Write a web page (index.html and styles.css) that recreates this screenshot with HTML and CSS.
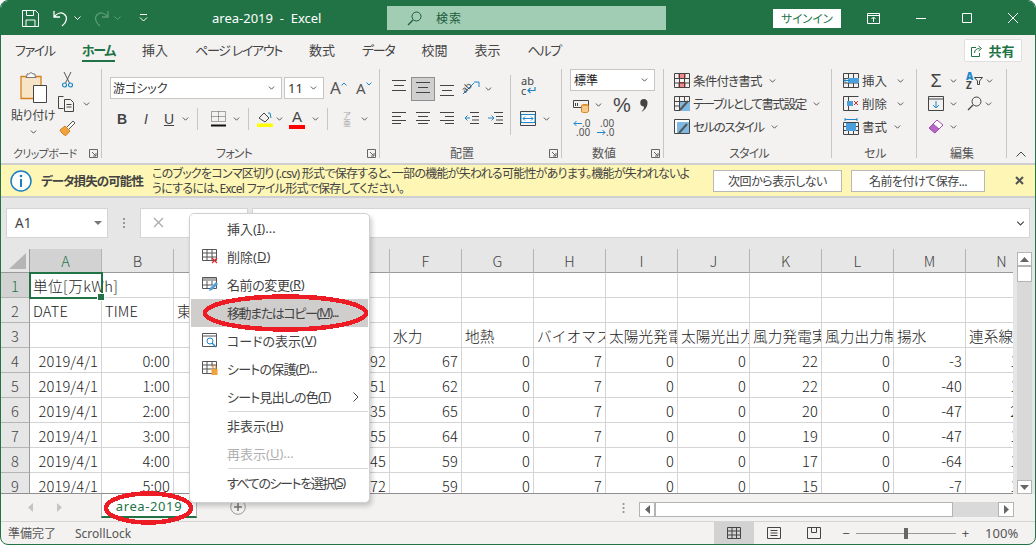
FILE: index.html
```html
<!DOCTYPE html>
<html lang="ja">
<head>
    <meta charset="UTF-8">
    <title>area-2019 - Excel</title>
    <link rel="stylesheet" href="styles.css">
</head>
<body>

<svg class="defs" width="0" height="0">
    <symbol id="chev" viewBox="0 0 8 5"><path d="M.7.7 4 4 7.3.7" fill="none" stroke="#444" stroke-width="1.1"/></symbol>
    <symbol id="launch" viewBox="0 0 9 9"><path d="M.5 8.500V.5h8v8z M3 3l4 4M7 4v3H4" fill="none" stroke="#666"/></symbol>
    <symbol id="al3" viewBox="0 0 14 14"><path d="M0 .5h14M2 5.500h10M0 10.500h14" fill="none" stroke="#444"/></symbol>
    <symbol id="al-l" viewBox="0 0 14 12"><path d="M0 .5h14M0 4.500h9M0 8.500h14M0 11.500h9" fill="none" stroke="#444"/></symbol>
    <symbol id="al-c" viewBox="0 0 14 12"><path d="M0 .5h14M2 4.500h10M0 8.500h14M2 11.500h10" fill="none" stroke="#444"/></symbol>
    <symbol id="al-r" viewBox="0 0 14 12"><path d="M0 .5h14M5 4.500h9M0 8.500h14M5 11.500h9" fill="none" stroke="#444"/></symbol>
    <symbol id="tbl" viewBox="0 0 16 15"><path d="M.5.500h15v14H.5zM.5 5.500h15M.5 10h15M5.500.5v14M10.500.5v14" fill="none" stroke="#444"/></symbol>
</svg>

<div class="window">

    <header class="titlebar">
        <div class="qat">
            <svg class="save" width="17" height="17" viewBox="0 0 17 17"><path d="M.5.500h13l3 3v13H.5zM4 16.500V10h9v6.500M4.500.5v5h7v-5" fill="none" stroke="#fff"/></svg>
            <svg class="undo" width="18" height="17" viewBox="0 0 18 17"><path d="M2 1v6h6M2 7c3-4 7-5 10-3 4 3 3 8-2 12" fill="none" stroke="#fff" stroke-width="1.300"/></svg>
            <svg class="qat-chev" width="7" height="4"><path d="M.5.500 3.500 3.500 6.500.500" fill="none" stroke="#fff"/></svg>
            <svg class="redo" width="18" height="17" viewBox="0 0 18 17"><path d="M16 1v6h-6M16 7c-3-4-7-5-10-3-4 3-3 8 2 12" fill="none" stroke="#5c9a78" stroke-width="1.300"/></svg>
            <svg class="qat-chev" width="7" height="4"><path d="M.5.500 3.500 3.500 6.500.500" fill="none" stroke="#5c9a78"/></svg>
            <svg class="custom" width="9" height="8" viewBox="0 0 9 8"><path d="M1 .5h7M1 3.500 4.500 7 8 3.500" fill="none" stroke="#fff"/></svg>
        </div>
        <div class="doc-title">area-2019&nbsp; -&nbsp; Excel</div>
        <div class="search">
            <svg width="15" height="15" viewBox="0 0 15 15"><circle cx="9.500" cy="5.500" r="4.500" fill="none" stroke="#1c5c3a"/><path d="M6 9 1 14" stroke="#1c5c3a" stroke-width="1.200"/></svg>
            <span>検索</span>
        </div>
        <div class="signin">サインイン</div>
        <div class="win-btns">
            <svg width="13" height="11" viewBox="0 0 13 11"><path d="M.5.500h12v10H.5zM.5 2.500h12M6.500 9V4.500M4.500 6l2-2 2 2" fill="none" stroke="#fff"/></svg>
            <svg width="10" height="10" viewBox="0 0 10 10"><path d="M0 5.500h10" stroke="#fff"/></svg>
            <svg width="10" height="10" viewBox="0 0 10 10"><path d="M.5.500h9v9h-9z" fill="none" stroke="#fff"/></svg>
            <svg width="10" height="10" viewBox="0 0 10 10"><path d="M0 0l10 10M10 0 0 10" stroke="#fff"/></svg>
        </div>
    </header>

    <nav class="tabs">
        <a class="kana">ファイル</a>
        <a class="kana active">ホーム</a>
        <a>挿入</a>
        <a class="kana">ページ レイアウト</a>
        <a>数式</a>
        <a class="kana">データ</a>
        <a>校閲</a>
        <a>表示</a>
        <a class="kana">ヘルプ</a>
        <div class="share">
            <svg width="11" height="12" viewBox="0 0 11 12"><path d="M5 2.500H.5v9h8V8M3.500 8c0-3 2-4.500 5-4.500M7.500 1l3 2.500-3 2.500" fill="none" stroke="#217346"/></svg>
            <span>共有</span>
        </div>
    </nav>

    <section class="ribbon">
        <div class="group g-clip">
            <div class="body clip-body">
                <div class="paste">
                    <svg width="27" height="31" viewBox="0 0 27 31">
                        <path d="M1 4.500h20v22H1z" fill="#f7e3c6" stroke="#d67f1c" stroke-width="1.300"/>
                        <path d="M7 4V2h2l2-1.500L13 2h2v2l1 1.500H6z" fill="#fff" stroke="#777"/>
                        <path d="M13.500 13.500h13v17h-13z" fill="#fff" stroke="#444"/>
                    </svg>
                    <div class="paste-label">貼り付け</div>
                    <svg class="chev" width="7" height="4"><use href="#chev"/></svg>
                </div>
                <div class="clip-tools">
                    <svg class="cut" width="11" height="16" viewBox="0 0 11 16"><path d="M2 0l5.500 11M9 0 3.500 11" stroke="#555" fill="none"/><circle cx="2.500" cy="13" r="2" fill="none" stroke="#1f87c9" stroke-width="1.200"/><circle cx="8.500" cy="13" r="2" fill="none" stroke="#1f87c9" stroke-width="1.200"/></svg>
                    <div class="clip-row">
                        <svg width="18" height="16" viewBox="0 0 18 16"><path d="M5.500 12.500H.5V.5h5M6.500 3.500h6l3 3v9h-9z M8.500 8.500h5M8.500 11h5" fill="none" stroke="#444"/></svg>
                        <svg class="chev" width="7" height="4"><use href="#chev"/></svg>
                    </div>
                    <svg class="painter" width="17" height="16" viewBox="0 0 17 16"><path d="M1 10l5-4 5 5-4 4.500c-2 0-5-3-6-5.500z" fill="#f2a23c" stroke="#d67f1c"/><path d="M8 7l6-6 2 2-6 6" fill="#fff" stroke="#555"/></svg>
                </div>
            </div>
            <div class="label label-clip"><span>クリップボード</span><svg class="launcher" width="9" height="9"><use href="#launch"/></svg></div>
        </div>

        <div class="group g-font">
            <div class="body font-body">
                <div class="row font-row">
                    <div class="select font-name">游ゴシック<svg width="7" height="4"><use href="#chev"/></svg></div>
                    <div class="select font-size">11<svg width="7" height="4"><use href="#chev"/></svg></div>
                    <div class="grow-a">A<svg width="6" height="4" viewBox="0 0 6 4"><path d="M.5 3.500 3 1l2.500 2.500" fill="none" stroke="#1f87c9"/></svg></div>
                    <div class="grow-a shrink">A<svg width="6" height="4" viewBox="0 0 6 4"><path d="M.5.500 3 3 5.500.500" fill="none" stroke="#1f87c9"/></svg></div>
                </div>
                <div class="row fmt-row">
                    <span class="tb w24 bold">B</span>
                    <span class="tb w24 ital">I</span>
                    <span class="tb w22 under">U</span>
                    <span class="tb w10"><svg width="7" height="4"><use href="#chev"/></svg></span>
                    <i class="vsep"></i>
                    <span class="tb w26"><svg width="15" height="16" viewBox="0 0 15 16"><path d="M.5.500h14v10H.500zM7.500.500v10M.5 5.500h14" fill="none" stroke="#555" stroke-dasharray="1 1"/><path d="M0 14.500h15" stroke="#111" stroke-width="2"/></svg></span>
                    <span class="tb w10"><svg width="7" height="4"><use href="#chev"/></svg></span>
                    <i class="vsep"></i>
                    <span class="tb w18"><svg width="16" height="16" viewBox="0 0 16 16"><path d="M2 7l5-5 5 5-4 4z" fill="none" stroke="#444"/><path d="M11 2h2l1 5" fill="none" stroke="#1f87c9"/><path d="M0 12.500h16V16H0z" fill="#ffff00"/></svg></span>
                    <span class="tb w10"><svg width="7" height="4"><use href="#chev"/></svg></span>
                    <span class="tb w26 color-a">A</span>
                    <span class="tb w10"><svg width="7" height="4"><use href="#chev"/></svg></span>
                    <i class="vsep"></i>
                    <span class="tb w24 ruby">ア<br>亜</span>
                    <span class="tb w10"><svg width="7" height="4"><use href="#chev"/></svg></span>
                </div>
            </div>
            <div class="label label-font"><span class="t2">フォント</span><svg class="launcher" width="9" height="9"><use href="#launch"/></svg></div>
        </div>

        <div class="group g-align">
            <div class="body align-body">
                <div class="align-left">
                    <div class="row align-row">
                        <span class="tb w24"><svg width="14" height="14" class="up3"><use href="#al3"/></svg></span>
                        <span class="tb w24 pressed"><svg width="14" height="14"><use href="#al3"/></svg></span>
                        <span class="tb w24"><svg width="14" height="14" class="down3"><use href="#al3"/></svg></span>
                        <span class="tb w24"><svg class="orient" width="18" height="17" viewBox="0 0 18 17"><path d="M1 13 12 2" stroke="#1f87c9"/><path d="M12 1h5v5" fill="none" stroke="#1f87c9"/><text x="1" y="10" class="ab" transform="rotate(-45 5 9)">ab</text></svg></span>
                        <span class="tb w10"><svg width="7" height="4"><use href="#chev"/></svg></span>
                    </div>
                    <div class="row align-row second">
                        <span class="tb w24"><svg width="14" height="12"><use href="#al-l"/></svg></span>
                        <span class="tb w24"><svg width="14" height="12"><use href="#al-c"/></svg></span>
                        <span class="tb w24"><svg width="14" height="12"><use href="#al-r"/></svg></span>
                        <span class="tb w24"><svg width="15" height="12" viewBox="0 0 15 12"><path d="M6 .5h9M6 11.500h9M8 4.500h7M8 8h7" stroke="#444"/><path d="M6 6H1M3.500 3.500 1 6l2.500 2.500" fill="none" stroke="#1f87c9"/></svg></span>
                        <span class="tb w24"><svg width="15" height="12" viewBox="0 0 15 12"><path d="M6 .5h9M6 11.500h9M8 4.500h7M8 8h7" stroke="#444"/><path d="M0 6h6M3.500 3.500 6 6 3.500 8.500" fill="none" stroke="#1f87c9"/></svg></span>
                    </div>
                </div>
                <div class="align-right">
                    <div class="wrap-ic">ab<br>c<svg width="9" height="8" viewBox="0 0 9 8"><path d="M8 0v3.500H1M3.500 1 1 3.500 3.500 6" fill="none" stroke="#1f87c9" stroke-width="1.200"/></svg></div>
                    <div class="row merge-row">
                        <svg width="16" height="15" viewBox="0 0 16 15"><path d="M.5.500h15v14H.5z" fill="none" stroke="#444"/><path d="M1 3.500h14v8H1z" fill="#fff" stroke="#1f87c9"/><path d="M3 7.500h10M5 5.500 3 7.500l2 2M11 5.500l2 2-2 2" fill="none" stroke="#1f87c9"/></svg>
                        <svg width="7" height="4"><use href="#chev"/></svg>
                    </div>
                </div>
            </div>
            <div class="label label-align"><span>配置</span><svg class="launcher" width="9" height="9"><use href="#launch"/></svg></div>
        </div>

        <div class="group g-num">
            <div class="body num-body">
                <div class="select num-format">標準<svg width="7" height="4"><use href="#chev"/></svg></div>
                <div class="row num-row">
                    <svg width="16" height="15" viewBox="0 0 16 15"><path d="M.5 2.500h15v7H.5z" fill="none" stroke="#444"/><path d="M2.500 5v3M4.500 5v3" stroke="#444"/><ellipse cx="12" cy="8" rx="3.500" ry="1.500" fill="#f2a23c" stroke="#d67f1c"/><path d="M8.500 8v5.500c0 1.500 7 1.500 7 0V8" fill="#f7c98b" stroke="#d67f1c"/></svg>
                    <svg class="num-chev" width="7" height="4"><use href="#chev"/></svg>
                    <span class="percent">%</span>
                    <svg class="comma" width="8" height="13" viewBox="0 0 8 13"><path d="M4 0a3.500 3.500 0 0 1 3.500 4C7.500 8 5 11 1.500 13 3.500 10.500 4 9 4 7.500A3.700 3.700 0 0 1 4 0z" fill="#444"/></svg>
                </div>
                <div class="row num-row dec-row">
                    <span class="dec">
                        <span class="dec-line"><svg width="9" height="7" viewBox="0 0 9 7"><path d="M9 3.500H1M3.500 1 1 3.500 3.500 6" fill="none" stroke="#1f87c9"/></svg>.0</span>
                        <span class="dec-line indent">.00</span>
                    </span>
                    <span class="dec">
                        <span class="dec-line indent">.00</span>
                        <span class="dec-line"><svg width="9" height="7" viewBox="0 0 9 7"><path d="M0 3.500h8M5.500 1 8 3.500 5.500 6" fill="none" stroke="#1f87c9"/></svg>.0</span>
                    </span>
                </div>
            </div>
            <div class="label label-num"><span>数値</span><svg class="launcher" width="9" height="9"><use href="#launch"/></svg></div>
        </div>

        <div class="group g-style">
            <div class="body list-body">
                <div class="list-item">
                    <svg width="16" height="15" viewBox="0 0 16 15"><path d="M5 .5h6v5H5zM5 9.500h6v5H5z" fill="#ef8a8f" stroke="#e0282e"/><use href="#tbl" width="16" height="15"/></svg>
                    <span class="t2">条件付き書式</span><svg width="7" height="4"><use href="#chev"/></svg>
                </div>
                <div class="list-item">
                    <svg width="16" height="15" viewBox="0 0 16 15"><use href="#tbl" width="16" height="15"/><path d="M6 6h10v9H6z" fill="#7db9e3"/><path d="M6 14l8-9" stroke="#555" stroke-width="2"/></svg>
                    <span class="t3">テーブルとして書式設定</span><svg width="7" height="4"><use href="#chev"/></svg>
                </div>
                <div class="list-item">
                    <svg width="16" height="15" viewBox="0 0 16 15"><path d="M.5.500h15v14H.5z" fill="#fff" stroke="#444"/><path d="M3 3h12v11H3z" fill="#7db9e3"/><path d="M5 14l8-9" stroke="#555" stroke-width="2"/></svg>
                    <span class="t3">セルのスタイル</span><svg width="7" height="4"><use href="#chev"/></svg>
                </div>
            </div>
            <div class="label label-style"><span class="t2">スタイル</span></div>
        </div>

        <div class="group g-cells">
            <div class="body list-body cells-body">
                <div class="list-item">
                    <svg width="16" height="15" viewBox="0 0 16 15"><use href="#tbl" width="16" height="15"/><path d="M5 5h11v5H5z" fill="#4a9fdc"/><path d="M7 7.500H1M3.500 5 1 7.500 3.500 10" fill="none" stroke="#1f87c9"/></svg>
                    <span>挿入</span><svg class="far" width="7" height="4"><use href="#chev"/></svg>
                </div>
                <div class="list-item">
                    <svg width="16" height="15" viewBox="0 0 16 15"><path d="M.5.500h15M.5 14.500h15M.5.500v14M5.500.5v14" fill="none" stroke="#444"/><path d="M4 5h6v5H4z" fill="#4a9fdc"/><path d="M11 5l4 4M15 5l-4 4" stroke="#e0282e"/></svg>
                    <span>削除</span><svg class="far" width="7" height="4"><use href="#chev"/></svg>
                </div>
                <div class="list-item">
                    <svg width="16" height="17" viewBox="0 0 16 17"><path d="M.5 4.500h15v12H.5zM.5 8.500h15M.5 12.500h15M5.500 4.500v12M10.500 4.500v12" fill="none" stroke="#444"/><path d="M3 5h10v8H3z" fill="#4a9fdc"/><path d="M2 1.500h12M2 0v3M14 0v3" stroke="#1f87c9"/></svg>
                    <span>書式</span><svg width="7" height="4"><use href="#chev"/></svg>
                </div>
            </div>
            <div class="label label-cells"><span>セル</span></div>
        </div>

        <div class="group g-edit">
            <div class="body edit-body">
                <div class="edit-row">
                    <span class="sigma">Σ</span>
                    <svg class="e-chev" width="7" height="4"><use href="#chev"/></svg>
                    <span class="sort"><b>A</b><br>Z</span>
                    <svg class="funnel" width="9" height="8" viewBox="0 0 9 8"><path d="M.5.500h8L5.500 4v3.500h-2V4z" fill="none" stroke="#444"/></svg>
                    <svg class="e-chev2" width="7" height="4"><use href="#chev"/></svg>
                </div>
                <div class="edit-row">
                    <svg width="16" height="15" viewBox="0 0 16 15"><path d="M.5.500h15v14H.5zM.5 3h15" fill="none" stroke="#444"/><path d="M8 5v7M5 9l3 3 3-3" fill="none" stroke="#1f87c9"/></svg>
                    <svg class="e-chev" width="7" height="4"><use href="#chev"/></svg>
                    <svg class="find" width="15" height="15" viewBox="0 0 15 15"><circle cx="9.500" cy="5.500" r="4.500" fill="none" stroke="#444"/><path d="M6 9 1 14" stroke="#444" stroke-width="1.200"/></svg>
                    <svg class="e-chev3" width="7" height="4"><use href="#chev"/></svg>
                </div>
                <div class="edit-row">
                    <svg width="16" height="16" viewBox="0 0 16 16"><path d="M1 9l8-8 6 5-8 8z" fill="#fff" stroke="#a04fb0"/><path d="M1 9l4-4 6 5-4 4z" fill="#b768c6" stroke="#a04fb0"/></svg>
                    <svg class="e-chev" width="7" height="4"><use href="#chev"/></svg>
                </div>
            </div>
            <div class="label label-edit"><span>編集</span></div>
        </div>

        <svg class="collapse" width="10" height="6" viewBox="0 0 10 6"><path d="M.5 5.500 5 1l4.500 4.500" fill="none" stroke="#444"/></svg>
    </section>

    <section class="msgbar">
        <svg width="22" height="22" viewBox="0 0 22 22"><circle cx="11" cy="11" r="10" fill="#fff" stroke="#1b7fc4" stroke-width="1.500"/><path d="M11 9v8" stroke="#1b7fc4" stroke-width="2"/><circle cx="11" cy="6" r="1.300" fill="#1b7fc4"/></svg>
        <strong>データ損失の可能性</strong>
        <p>このブックをコンマ区切り (.csv) 形式で保存すると、一部の機能が失われる可能性があります。機能が失われないよ<br>うにするには、Excel ファイル形式で保存してください。</p>
        <button class="msg-btn first">次回から表示しない</button>
        <button class="msg-btn second">名前を付けて保存...</button>
        <svg class="msg-close" width="9" height="9" viewBox="0 0 9 9"><path d="M1 1l7 7M8 1 1 8" stroke="#555" stroke-width="2"/></svg>
    </section>

    <section class="formula">
        <div class="namebox">A1<svg width="8" height="4" viewBox="0 0 8 4"><path d="M0 0h8L4 4z" fill="#777"/></svg></div>
        <div class="dots"></div>
        <div class="fx-btns"><svg width="11" height="11" viewBox="0 0 11 11"><path d="M1 1l9 9M10 1l-9 9" stroke="#aaa" stroke-width="1.300"/></svg></div>
        <div class="fx-input"><svg width="9" height="5"><use href="#chev"/></svg></div>
    </section>

    <section class="sheet">
        <div class="grid">
            <div class="hd corner"><i></i></div>
            <div class="hd col sel">A</div><div class="hd col">B</div><div class="hd col">C</div><div class="hd col">D</div><div class="hd col">E</div><div class="hd col">F</div><div class="hd col">G</div><div class="hd col">H</div><div class="hd col">I</div><div class="hd col">J</div><div class="hd col">K</div><div class="hd col">L</div><div class="hd col">M</div><div class="hd col">N</div>

            <div class="hd rowh sel">1</div>
            <div class="c active">単位[万kWh]</div><div class="c"></div><div class="c"></div><div class="c"></div><div class="c"></div><div class="c"></div><div class="c"></div><div class="c"></div><div class="c"></div><div class="c"></div><div class="c"></div><div class="c"></div><div class="c"></div><div class="c"></div>

            <div class="hd rowh">2</div>
            <div class="c">DATE</div><div class="c">TIME</div><div class="c">東</div><div class="c"></div><div class="c"></div><div class="c"></div><div class="c"></div><div class="c"></div><div class="c"></div><div class="c"></div><div class="c"></div><div class="c"></div><div class="c"></div><div class="c"></div>

            <div class="hd rowh">3</div>
            <div class="c"></div><div class="c"></div><div class="c"></div><div class="c"></div><div class="c"></div><div class="c">水力</div><div class="c">地熱</div><div class="c">バイオマス</div><div class="c">太陽光発電実績</div><div class="c">太陽光出力制御</div><div class="c">風力発電実績</div><div class="c">風力出力制御</div><div class="c">揚水</div><div class="c">連系線</div>

            <div class="hd rowh">4</div>
            <div class="c n">2019/4/1</div><div class="c n">0:00</div><div class="c"></div><div class="c"></div><div class="c n">192</div><div class="c n">67</div><div class="c n">0</div><div class="c n">7</div><div class="c n">0</div><div class="c n">0</div><div class="c n">22</div><div class="c n">0</div><div class="c n">-3</div><div class="c n">100</div>

            <div class="hd rowh">5</div>
            <div class="c n">2019/4/1</div><div class="c n">1:00</div><div class="c"></div><div class="c"></div><div class="c n">151</div><div class="c n">62</div><div class="c n">0</div><div class="c n">7</div><div class="c n">0</div><div class="c n">0</div><div class="c n">22</div><div class="c n">0</div><div class="c n">-40</div><div class="c n">100</div>

            <div class="hd rowh">6</div>
            <div class="c n">2019/4/1</div><div class="c n">2:00</div><div class="c"></div><div class="c"></div><div class="c n">135</div><div class="c n">65</div><div class="c n">0</div><div class="c n">7</div><div class="c n">0</div><div class="c n">0</div><div class="c n">20</div><div class="c n">0</div><div class="c n">-47</div><div class="c n">200</div>

            <div class="hd rowh">7</div>
            <div class="c n">2019/4/1</div><div class="c n">3:00</div><div class="c"></div><div class="c"></div><div class="c n">155</div><div class="c n">64</div><div class="c n">0</div><div class="c n">7</div><div class="c n">0</div><div class="c n">0</div><div class="c n">19</div><div class="c n">0</div><div class="c n">-47</div><div class="c n">100</div>

            <div class="hd rowh">8</div>
            <div class="c n">2019/4/1</div><div class="c n">4:00</div><div class="c"></div><div class="c"></div><div class="c n">145</div><div class="c n">59</div><div class="c n">0</div><div class="c n">7</div><div class="c n">0</div><div class="c n">0</div><div class="c n">17</div><div class="c n">0</div><div class="c n">-64</div><div class="c n">100</div>

            <div class="hd rowh">9</div>
            <div class="c n">2019/4/1</div><div class="c n">5:00</div><div class="c"></div><div class="c"></div><div class="c n">172</div><div class="c n">59</div><div class="c n">0</div><div class="c n">7</div><div class="c n">0</div><div class="c n">0</div><div class="c n">15</div><div class="c n">0</div><div class="c n">-7</div><div class="c n">100</div>
        </div>
        <div class="vscroll">
            <div class="sb-btn"><svg width="9" height="5" viewBox="0 0 9 5"><path d="M0 5 4.500 0 9 5z" fill="#666"/></svg></div>
            <div class="sb-thumb"></div>
            <div class="sb-track"></div>
            <div class="sb-btn"><svg width="9" height="5" viewBox="0 0 9 5"><path d="M0 0h9L4.500 5z" fill="#666"/></svg></div>
        </div>
    </section>

    <section class="sheetbar">
        <div class="sheet-nav">
            <svg width="5" height="9" viewBox="0 0 5 9"><path d="M5 0v9L0 4.500z" fill="#c4c4c4"/></svg>
            <svg width="5" height="9" viewBox="0 0 5 9"><path d="M0 0v9l5-4.500z" fill="#c4c4c4"/></svg>
        </div>
        <div class="sheet-tab">area-2019</div>
        <svg class="add-sheet" width="16" height="16" viewBox="0 0 16 16"><circle cx="8" cy="8" r="7.300" fill="none" stroke="#999"/><path d="M8 4v8M4 8h8" stroke="#777" stroke-width="1.500"/></svg>
        <div class="split-dots"></div>
        <div class="hscroll">
            <div class="sb-btn"><svg width="5" height="9" viewBox="0 0 5 9"><path d="M5 0v9L0 4.500z" fill="#666"/></svg></div>
            <div class="sb-thumb"></div>
            <div class="sb-track"></div>
            <div class="sb-btn"><svg width="5" height="9" viewBox="0 0 5 9"><path d="M0 0v9l5-4.500z" fill="#666"/></svg></div>
        </div>
    </section>

    <footer class="statusbar">
        <span class="ready">準備完了</span>
        <span>ScrollLock</span>
        <div class="view-btn on"><svg width="14" height="12" viewBox="0 0 14 12"><path d="M.5.500h13v11H.5zM.5 4h13M.5 8h13M5 .5v11M9.500.5v11" fill="none" stroke="#444"/></svg></div>
        <div class="view-btn"><svg width="14" height="12" viewBox="0 0 14 12"><path d="M.5.500h13v11H.5zM3.500 3.500h7M3.500 6h7M3.500 8.500h7" fill="none" stroke="#444"/></svg></div>
        <div class="view-btn"><svg width="14" height="12" viewBox="0 0 14 12"><path d="M.5.500h13v11H.5zM4.500.5v5h5v-5" fill="none" stroke="#444"/></svg></div>
        <div class="zoom">
            <span>−</span>
            <div class="slider"><i></i></div>
            <span>+</span>
            <span class="pct">100%</span>
        </div>
    </footer>

    <ul class="menu">
        <li><span class="mi"></span>挿入(<u>I</u>)...</li>
        <li><svg class="mi" width="16" height="15" viewBox="0 0 16 15"><path d="M.5.500h14v11H.5zM.5 4h14M.5 8h14M5 .5v11M10 .5v11" fill="none" stroke="#555"/><path d="M10 9l5 5M15 9l-5 5" stroke="#e0282e" stroke-width="1.200"/></svg>削除(<u>D</u>)</li>
        <li class="t1"><svg class="mi" width="16" height="15" viewBox="0 0 16 15"><path d="M.5.500h14v11H.5z" fill="none" stroke="#555"/><path d="M1 1h13v3H1z" fill="#aaa"/><path d="M.5 8h10M5 4v8M10 4v4" stroke="#555"/><path d="M7 14l1-3 6-6 2 2-6 6z" fill="#4a9fdc"/></svg>名前の変更(<u>R</u>)</li>
        <li class="hover t3"><span class="mi"></span>移動またはコピー(<u>M</u>)...</li>
        <li><svg class="mi" width="16" height="15" viewBox="0 0 16 15"><path d="M.5.500h14v13H.5zM.5 3h14" fill="none" stroke="#555"/><circle cx="8" cy="8" r="3" fill="#fff" stroke="#1f87c9"/><path d="M10 10l4 4" stroke="#1f87c9" stroke-width="1.300"/></svg>コードの表示(<u>V</u>)</li>
        <li class="t2"><svg class="mi" width="16" height="15" viewBox="0 0 16 15"><path d="M.5.500h14v12H.5zM.5 4h14M.5 8h14M5 .5v12M10 .5v5" fill="none" stroke="#555"/><path d="M9.500 8h6v6h-6z" fill="#f2a23c"/><path d="M11 8V6c0-2 3-2 3 0v2" fill="none" stroke="#d67f1c"/></svg>シートの保護(<u>P</u>)...</li>
        <li class="t2"><span class="mi"></span>シート見出しの色(<u>T</u>)<svg class="arrow" width="6" height="10" viewBox="0 0 6 10"><path d="M.5.500 5 5 .5 9.500" fill="none" stroke="#444"/></svg></li>
        <li class="sep"></li>
        <li><span class="mi"></span>非表示(<u>H</u>)</li>
        <li class="off"><span class="mi"></span>再表示(<u>U</u>)...</li>
        <li class="sep"></li>
        <li class="t3"><span class="mi"></span>すべてのシートを選択(<u>S</u>)</li>
    </ul>

    <svg class="marks" width="1036" height="545" viewBox="0 0 1036 545">
        <ellipse cx="285.500" cy="313" rx="80.500" ry="16.500"/>
        <ellipse cx="148.500" cy="508" rx="42.500" ry="14.500"/>
    </svg>
</div>

</body>
</html>
```

FILE: styles.css
```css
* {
    box-sizing: border-box;
}

html, body {
    margin: 0;
    padding: 0;
    background-color: #ffffff;
}

body {
    font-family: "Noto Sans", "Noto Sans CJK JP", sans-serif;
    font-size: 12px;
    color: #444;
    font-feature-settings: "palt";
}

.defs {
    position: absolute;
}

svg {
    display: block;
    flex: none;
}

/* the UI font has wider kana than the original, these pull text back */
.t1 { letter-spacing: -.4px; }
.t2 { letter-spacing: -.8px; }
.t3 { letter-spacing: -1.4px; }

.window {
    position: relative;
    width: 1036px;
    height: 545px;
    border: 1px solid #217346;
    border-radius: 8px;
    overflow: hidden;
    display: flex;
    flex-direction: column;
    background-color: #f3f2f1;
}

/* title bar */
.titlebar {
    height: 34px;
    background-color: #217346;
    color: #fff;
    display: flex;
    align-items: center;
    flex: none;
}

.qat {
    width: 211px;
    padding-left: 21px;
    display: flex;
    align-items: center;
}

.undo { margin-left: 13px; }
.qat .qat-chev { margin-left: 4px; }
.redo { margin-left: 11px; }
.custom { margin-left: 18px; }

.doc-title {
    width: 175px;
    font-size: 13px;
}

.search {
    width: 279px;
    height: 24px;
    background-color: #a0cdb3;
    display: flex;
    align-items: center;
    padding-left: 20px;
    color: #1c5c3a;
    font-size: 12px;
}

.search span {
    margin-left: 14px;
    letter-spacing: 1px;
}

.signin {
    margin-left: 107px;
    width: 68px;
    height: 19px;
    background-color: #fff;
    color: #217346;
    font-size: 11.500px;
    line-height: 19px;
    text-align: center;
}

.win-btns {
    margin-left: 26px;
    display: flex;
    align-items: center;
    gap: 36px;
}

/* tabs */
.tabs {
    height: 31px;
    flex: none;
    display: flex;
    align-items: flex-start;
    padding: 6px 0 0 14px;
    gap: 27px;
    font-size: 13px;
}

.tabs a {
    height: 21px;
    line-height: 18px;
    color: #444;
}

.tabs a.kana {
    letter-spacing: -1.300px;
}

.tabs a.active {
    font-weight: bold;
    color: #217346;
    border-bottom: 2px solid #217346;
}

.share {
    margin-left: auto;
    margin-right: 13px;
    margin-top: -2px;
    width: 58px;
    height: 23px;
    background-color: #fff;
    border: 1px solid #e1dfdd;
    border-radius: 2px;
    display: flex;
    align-items: center;
    justify-content: center;
    gap: 6px;
    color: #217346;
    font-weight: bold;
    font-size: 13px;
}

/* ribbon */
.ribbon {
    height: 97px;
    flex: none;
    display: flex;
    padding: 3px 0 5px;
}

.group {
    display: flex;
    flex-direction: column;
    border-right: 1px solid #c8c6c4;
    flex: none;
}

.g-clip { width: 101px; }
.g-font { width: 278px; }
.g-align { width: 182px; }
.g-num { width: 102px; }
.g-style { width: 168px; }
.g-cells { width: 85px; }
.g-edit { width: 90px; }

.body {
    flex: 1;
    min-height: 0;
}

.label {
    height: 12px;
    margin-bottom: -1px;
    display: flex;
    align-items: center;
    font-size: 12px;
    color: #555;
    white-space: nowrap;
}

.launcher {
    margin-left: auto;
    margin-right: 3px;
}

.label-clip { padding-left: 12px; font-size: 11px; letter-spacing: -.6px; }
.label-font { padding-left: 114px; }
.label-align { padding-left: 70px; }
.label-num { padding-left: 30px; }
.label-style { padding-left: 65px; }
.label-cells { padding-left: 32px; }
.label-edit { padding-left: 33px; }

.row {
    display: flex;
    align-items: center;
}

.tb {
    display: flex;
    align-items: center;
    justify-content: center;
    height: 24px;
    flex: none;
}

.w10 { width: 10px; }
.w18 { width: 18px; }
.w22 { width: 22px; }
.w24 { width: 24px; }
.w26 { width: 26px; }

.vsep {
    width: 1px;
    height: 22px;
    margin: 0 7px;
    background-color: #c8c6c4;
}

/* clipboard */
.clip-body {
    display: flex;
    padding-left: 11px;
}

.paste {
    width: 42px;
    padding-top: 3px;
    display: flex;
    flex-direction: column;
    align-items: center;
}

.paste-label {
    margin-top: 3px;
    height: 18px;
    font-size: 12px;
    white-space: nowrap;
    letter-spacing: -.4px;
}

.paste .chev { margin-top: 6px; }

.clip-tools {
    margin-left: 4px;
    padding-top: 3px;
    display: flex;
    flex-direction: column;
}

.cut { margin-left: 4px; }

.clip-row {
    margin-top: 8px;
    display: flex;
    align-items: center;
    gap: 7px;
}

.painter {
    margin-top: 8px;
    margin-left: 1px;
}

/* font */
.font-body { padding-left: 8px; }

.font-row {
    margin-top: 8px;
    height: 22px;
}

.select {
    height: 22px;
    background-color: #fff;
    border: 1px solid #c8c6c4;
    display: flex;
    align-items: center;
    justify-content: space-between;
    padding: 0 6px 0 2px;
    color: #333;
    font-size: 12px;
}

.font-name { width: 172px; }

.font-size {
    width: 40px;
    margin-left: 2px;
    font-size: 13px;
    padding-left: 3px;
}

.grow-a {
    display: flex;
    align-items: flex-start;
    margin-left: 6px;
    width: 20px;
    font-size: 17px;
    line-height: 20px;
    color: #555;
}

.grow-a.shrink {
    font-size: 15px;
    margin-left: 6px;
}

.grow-a svg { margin-top: 4px; }

.fmt-row { margin-top: 8px; }

.bold { font-weight: bold; font-size: 14px; font-family: "Liberation Sans", sans-serif; color: #444; }
.ital { font-style: italic; font-size: 14px; font-family: "Liberation Sans", sans-serif; }
.under { text-decoration: underline; font-size: 14px; font-family: "Liberation Sans", sans-serif; }

.color-a {
    font-size: 15px;
    line-height: 14px;
    height: 20px;
    border-bottom: 4px solid #ff0000;
    width: 16px;
    margin: 0 5px;
    font-family: "Liberation Sans", sans-serif;
}

.ruby {
    font-size: 8px;
    line-height: 8px;
    text-align: center;
    color: #a6a6a6;
}

/* alignment */
.align-body {
    display: flex;
    padding-left: 7px;
}

.align-left {
    width: 124px;
    height: 60px;
    margin-top: 6px;
    border-right: 1px solid #c8c6c4;
}

.align-row { margin-top: 2px; }
.align-row.second { margin-top: 5px; }

.pressed {
    height: 24px;
    background-color: #cfcfcf;
    border: 1px solid #8f8f8f;
}

.up3 { margin-top: -5px; }
.down3 { margin-top: 5px; }

.orient { overflow: visible; }

.ab {
    font-size: 9px;
    fill: #444;
}

.align-right { padding-left: 9px; }

.wrap-ic {
    margin-top: 7px;
    height: 29px;
    padding-left: 1px;
    font-size: 11px;
    line-height: 10px;
    color: #444;
}

.wrap-ic svg { display: inline-block; margin-left: 1px; }

.merge-row {
    margin-top: 6px;
    gap: 7px;
}

/* number */
.num-body { padding-left: 8px; }

.num-format {
    width: 85px;
    font-size: 12px;
    padding-left: 3px;
    color: #222;
}

.num-row {
    margin-top: 3px;
    height: 22px;
    padding-left: 3px;
}

.num-chev { margin-left: 6px; }

.percent {
    margin-left: 11px;
    width: 22px;
    font-size: 20px;
    line-height: 20px;
    font-weight: 300;
    font-family: "Liberation Sans", sans-serif;
    color: #444;
}

.comma { margin-left: 5px; }

.dec-row {
    margin-top: 1px;
    gap: 9px;
}

.dec {
    display: flex;
    flex-direction: column;
    width: 15px;
    font-size: 10px;
    line-height: 9px;
    color: #555;
}

.dec-line {
    display: flex;
    align-items: center;
    height: 9px;
    white-space: nowrap;
}

.dec-line.indent { padding-left: 3px; }

/* styles and cells */
.list-body {
    padding-left: 10px;
}

.cells-body { padding-left: 11px; }

.list-item {
    height: 23px;
    display: flex;
    align-items: center;
    gap: 3px;
    font-size: 12.500px;
    white-space: nowrap;
    color: #444;
}

.list-item span + svg { margin-left: 4px; }
.list-item .far { margin-left: 7px; }

/* editing */
.edit-body { padding-left: 11px; }

.edit-row {
    height: 23px;
    display: flex;
    align-items: center;
}

.sigma {
    width: 16px;
    font-size: 18px;
    line-height: 18px;
    text-align: center;
    font-family: "Liberation Sans", sans-serif;
}

.e-chev { margin-left: 6px; }

.sort {
    margin-left: 9px;
    width: 8px;
    font-size: 10px;
    line-height: 9px;
    font-weight: bold;
    color: #444;
}

.sort b { color: #1f87c9; }

.funnel { margin-left: 0; }
.e-chev2 { margin-left: 3px; }
.find { margin-left: 10px; }
.e-chev3 { margin-left: 3px; }

.collapse {
    margin: auto 0 1px 9px;
}

/* message bar */
.msgbar {
    height: 35px;
    flex: none;
    background-color: #fdf6b5;
    border-top: 2px solid #cfcfcf;
    border-bottom: 2px solid #cfcfcf;
    display: flex;
    align-items: center;
    padding-left: 9px;
    color: #444;
}

.msgbar strong {
    margin-left: 9px;
    width: 111px;
    font-size: 12.500px;
    letter-spacing: -.900px;
    flex: none;
}

.msgbar p {
    margin: 0;
    width: 550px;
    font-size: 12px;
    line-height: 15px;
    letter-spacing: -.750px;
    white-space: nowrap;
    flex: none;
}

.msg-btn {
    height: 22px;
    background-color: #fff;
    border: 1px solid #b8b8b8;
    font-family: inherit;
    font-feature-settings: inherit;
    font-size: 12px;
    color: #444;
    padding: 0;
    letter-spacing: -.500px;
}

.msg-btn.first {
    margin-left: 11px;
    width: 129px;
}

.msg-btn.second {
    margin-left: 9px;
    width: 134px;
}

.msg-close { margin-left: 30px; }

/* formula bar */
.formula {
    height: 51px;
    flex: none;
    background-color: #e6e6e6;
    display: flex;
    padding: 10px 5px 11px 5px;
}

.namebox {
    width: 102px;
    background-color: #fff;
    border: 1px solid #d4d4d4;
    display: flex;
    align-items: center;
    justify-content: space-between;
    padding: 0 5px 0 8px;
    font-size: 13.500px;
    color: #444;
}

.dots {
    width: 32px;
    background-image: radial-gradient(circle, #999 1px, transparent 1.200px);
    background-size: 4px 4px;
    background-repeat: repeat-y;
    background-position: center;
    margin: 9px 0;
}

.fx-btns {
    width: 108px;
    background-color: #fff;
    border: 1px solid #d4d4d4;
    padding: 8px 0 0 12px;
}

.fx-input {
    margin-left: 4px;
    flex: 1;
    background-color: #fff;
    border: 1px solid #d4d4d4;
    display: flex;
    align-items: center;
    justify-content: flex-end;
    padding-right: 4px;
}

/* sheet */
.sheet {
    height: 245px;
    flex: none;
    display: flex;
    background-color: #e6e6e6;
    overflow: hidden;
}

.grid {
    width: 1012px;
    height: 245px;
    flex: none;
    overflow: hidden;
    display: grid;
    grid-template-columns: 29px repeat(14, 72px);
    grid-template-rows: 24px repeat(9, 25px);
    background-color: #fff;
    font-family: "Noto Sans CJK JP", sans-serif;
    font-feature-settings: normal;
    font-size: 14.670px;
    font-weight: 300;
    letter-spacing: .1px;
    color: #222;
    border-bottom: 1px solid #8f8f8f;
}

.hd {
    background-color: #e6e6e6;
    color: #444;
    display: flex;
    align-items: center;
    justify-content: center;
}

.corner {
    border-right: 1px solid #9a9a9a;
    border-bottom: 1px solid #9a9a9a;
    padding: 5px 3px 3px 7px;
    align-items: flex-end;
    justify-content: flex-end;
}

.corner i {
    width: 0;
    height: 0;
    border-left: 17px solid transparent;
    border-bottom: 16px solid #b5b5b5;
}

.col {
    border-right: 1px solid #b4b4b4;
    border-bottom: 1px solid #9a9a9a;
}

.rowh {
    border-right: 1px solid #9a9a9a;
    border-bottom: 1px solid #b4b4b4;
}

.hd.sel {
    background-color: #d2d2d2;
    color: #217346;
}

.c {
    border-right: 1px solid #d4d4d4;
    border-bottom: 1px solid #d4d4d4;
    padding: 0 3px;
    line-height: 25px;
    white-space: nowrap;
    overflow: hidden;
}

.c.n {
    text-align: right;
}

.c.active {
    position: relative;
    overflow: visible;
    outline: 2px solid #217346;
    outline-offset: -1px;
    letter-spacing: .4px;
    z-index: 1;
}

.c.active::after {
    content: "";
    position: absolute;
    right: -4px;
    bottom: -4px;
    width: 6px;
    height: 6px;
    background-color: #217346;
    border: 1px solid #fff;
}

.vscroll {
    margin: 3px 0 0 4px;
    width: 15px;
    display: flex;
    flex-direction: column;
}

.sb-btn {
    flex: none;
    background-color: #fff;
    border: 1px solid #b4b4b4;
    display: flex;
    align-items: center;
    justify-content: center;
}

.sb-thumb {
    background-color: #fff;
    border: 1px solid #b4b4b4;
    flex: none;
}

.sb-track {
    flex: 1;
    background-color: #d9d9d9;
}

.vscroll .sb-btn { height: 14px; }
.vscroll .sb-thumb { height: 16px; }

/* sheet tabs */
.sheetbar {
    height: 28px;
    flex: none;
    display: flex;
    align-items: flex-start;
    border-bottom: 1px solid #d4d4d4;
}

.sheet-nav {
    width: 100px;
    height: 26px;
    padding-left: 27px;
    display: flex;
    align-items: center;
    gap: 24px;
}

.sheet-tab {
    width: 96px;
    height: 24px;
    background-color: #fff;
    border-left: 1px solid #b4b4b4;
    border-right: 1px solid #b4b4b4;
    border-bottom: 2px solid #217346;
    color: #217346;
    text-align: center;
    font-size: 13px;
    line-height: 24px;
    letter-spacing: .6px;
}

.add-sheet {
    margin: 5px 0 0 33px;
}

.split-dots {
    margin: 8px 0 0 376px;
    width: 3px;
    height: 12px;
    background-image: radial-gradient(circle, #999 1px, transparent 1.200px);
    background-size: 3px 4px;
}

.hscroll {
    margin: 8px 0 0 14px;
    width: 375px;
    height: 15px;
    display: flex;
}

.hscroll .sb-btn { width: 16px; }
.hscroll .sb-thumb { width: 298px; }

/* status bar */
.statusbar {
    height: 22px;
    flex: none;
    display: flex;
    align-items: center;
    padding-left: 7px;
    font-size: 12px;
    color: #555;
}

.ready { width: 67px; }

.view-btn {
    width: 40px;
    height: 22px;
    display: flex;
    align-items: center;
    justify-content: center;
}

.view-btn.on {
    margin-left: 583px;
    background-color: #d2d2d2;
}

.zoom {
    margin-left: 8px;
    display: flex;
    align-items: center;
    gap: 6px;
    font-size: 13px;
}

.slider {
    position: relative;
    width: 100px;
    height: 1px;
    background-color: #999;
}

.slider i {
    position: absolute;
    left: 48px;
    top: -5px;
    width: 4px;
    height: 11px;
    background-color: #666;
}

.pct { margin-left: 10px; }

/* context menu */
.menu {
    position: absolute;
    left: 188px;
    top: 212px;
    width: 181px;
    height: 290px;
    margin: 0;
    padding: 1px;
    list-style: none;
    background-color: #fff;
    border: 1px solid #d0d0d0;
    border-radius: 5px;
    box-shadow: 2px 3px 5px rgba(0, 0, 0, .2);
    font-size: 13px;
    color: #444;
    z-index: 2;
}

.menu li {
    position: relative;
    height: 28px;
    padding-bottom: 2px;
    display: flex;
    align-items: center;
    white-space: nowrap;
}

.menu .mi {
    width: 16px;
    height: 15px;
    margin: 0 9px 0 11px;
}

.menu .hover {
    background-color: #d0cecd;
}

.menu .off {
    color: #b0b0b0;
}

.menu .sep {
    height: 1px;
    padding: 0;
    margin: 0 0 0 37px;
    background-color: #d8d8d8;
}

.menu .arrow {
    position: absolute;
    right: 9px;
    top: 9px;
}

/* red marks drawn over the screenshot */
.marks {
    position: absolute;
    left: -1px;
    top: -1px;
    z-index: 3;
    pointer-events: none;
}

.marks ellipse {
    fill: none;
    stroke: #ed1c24;
    stroke-width: 4.500;
    shape-rendering: crispEdges;
}
```
